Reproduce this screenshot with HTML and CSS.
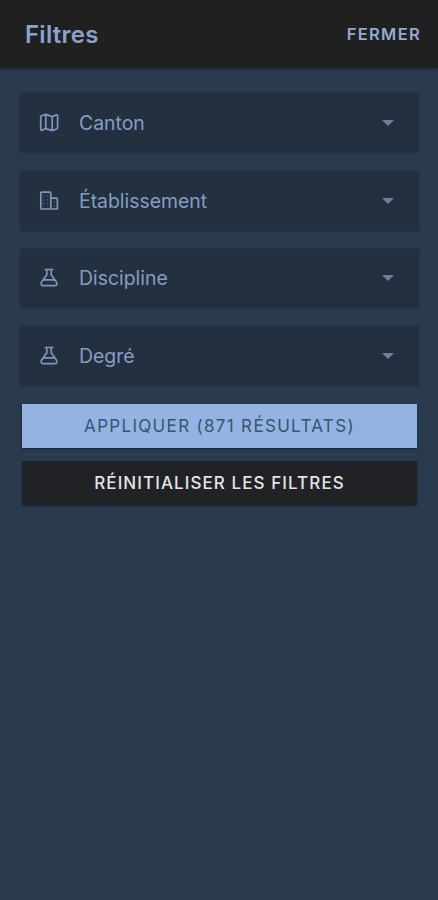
FILE: index.html
```html
<!DOCTYPE html>
<html lang="fr">
<head>
    <meta charset="UTF-8">
    <meta name="viewport" content="width=device-width, initial-scale=1.0">
    <title>Filtres</title>
    <link rel="stylesheet" href="styles.css">
</head>
<body>
    <header class="toolbar">
        <h1 class="title">Filtres</h1>
        <button class="close" type="button">Fermer</button>
    </header>
    <main class="filters">
        <div class="filter">
            <svg class="icon" viewBox="0 0 20 20">
                <path d="M1.7 4.2Q1.7 3.2 2.6 2.8L6.8 1.4 13.2 3.6 17.2 2Q18.6 1.6 18.6 3V14.6Q18.6 15.6 17.6 16L13.2 17.6 6.8 15.6 3 17.2Q1.7 17.6 1.7 16.2ZM6.8 1.4V15.6M13.2 3.6V17.6"/>
            </svg>
            <span class="label">Canton</span>
            <span class="arrow"></span>
        </div>
        <div class="filter">
            <svg class="icon" viewBox="0 0 20 20">
                <path d="M1.8 18V2.2Q1.8 1.2 2.8 1.2H10.8Q11.8 1.2 11.8 2.2V18ZM11.8 7.2H17.2Q18.4 7.2 18.4 8.4V18H11.8"/>
                <path class="windows" d="M4.8 4.4V16M8.6 4.4V16M15.2 10V16"/>
            </svg>
            <span class="label">Établissement</span>
            <span class="arrow"></span>
        </div>
        <div class="filter">
            <svg class="icon" viewBox="0 0 20 20">
                <path d="M6.2 1.5H13.8M7.8 1.5V6.8L2.6 14C1.4 16 2.4 17.6 4.2 17.6H15.8C17.6 17.6 18.6 16 17.4 14L12.2 6.8V1.5M4.4 11.8H15.6"/>
            </svg>
            <span class="label">Discipline</span>
            <span class="arrow"></span>
        </div>
        <div class="filter">
            <svg class="icon" viewBox="0 0 20 20">
                <path d="M6.2 1.5H13.8M7.8 1.5V6.8L2.6 14C1.4 16 2.4 17.6 4.2 17.6H15.8C17.6 17.6 18.6 16 17.4 14L12.2 6.8V1.5M4.4 11.8H15.6"/>
            </svg>
            <span class="label">Degré</span>
            <span class="arrow"></span>
        </div>
        <div class="actions">
            <button class="btn apply" type="button">Appliquer (871 résultats)</button>
            <button class="btn reset" type="button">Réinitialiser les filtres</button>
        </div>
    </main>
</body>
</html>
```

FILE: styles.css
```css
* {
    box-sizing: border-box;
}

body {
    margin: 0;
    min-height: 100vh;
    background: #2b3b4e;
    color: #89a3cb;
    font-family: Inter, "Liberation Sans", sans-serif;
}

button {
    border: 0;
    font-family: inherit;
    text-transform: uppercase;
}

/* Top bar */
.toolbar {
    display: flex;
    align-items: center;
    justify-content: space-between;
    height: 68px;
    padding: 0 16px 0 25px;
    background: #202020;
    box-shadow: 0 1px 3px rgba(0, 0, 0, 0.4);
}

.title {
    margin: 0;
    font-size: 24px;
    font-weight: 600;
    letter-spacing: 0.25px;
}

.close {
    padding: 0 1px 0 0;
    background: none;
    color: #91aad3;
    font-size: 16.5px;
    font-weight: 600;
    letter-spacing: 1.3px;
}

/* Select rows */
.filters {
    display: flex;
    flex-direction: column;
    gap: 18px;
    padding: 25px 19px 0 20px;
}

.filter {
    display: flex;
    align-items: center;
    height: 59.8px;
    padding: 0 25px 0 19px;
    border-radius: 4px;
    background: #233040;
    box-shadow: 0 0 2px rgba(20, 30, 42, 0.5);
}

.icon {
    width: 20px;
    height: 20px;
    fill: none;
    stroke: #7f95ba;
    stroke-width: 1.7;
    stroke-linejoin: round;
    stroke-linecap: round;
}

.windows {
    stroke-width: 1.2;
    stroke-dasharray: 1.2 2.6;
    stroke-linecap: butt;
    stroke-opacity: 0.6;
}

.label {
    flex: 1;
    margin-left: 20px;
    font-size: 19.4px;
    color: #859dc3;
}

.arrow {
    border: 6px solid transparent;
    border-top: 6px solid #6d7f9a;
    border-bottom: 0;
}

/* Buttons */
.actions {
    display: flex;
    flex-direction: column;
    gap: 13px;
    padding: 0 2px;
}

.btn {
    height: 44px;
    font-size: 17px;
    box-shadow: 0 1px 2px rgba(10, 18, 34, 0.6);
}

.apply {
    background: #93b3e3;
    color: #3a5374;
    letter-spacing: 1.32px;
}

.reset {
    border-radius: 2px;
    background: #212226;
    color: #e4e4e6;
    font-weight: 500;
    letter-spacing: 1.08px;
}
```
